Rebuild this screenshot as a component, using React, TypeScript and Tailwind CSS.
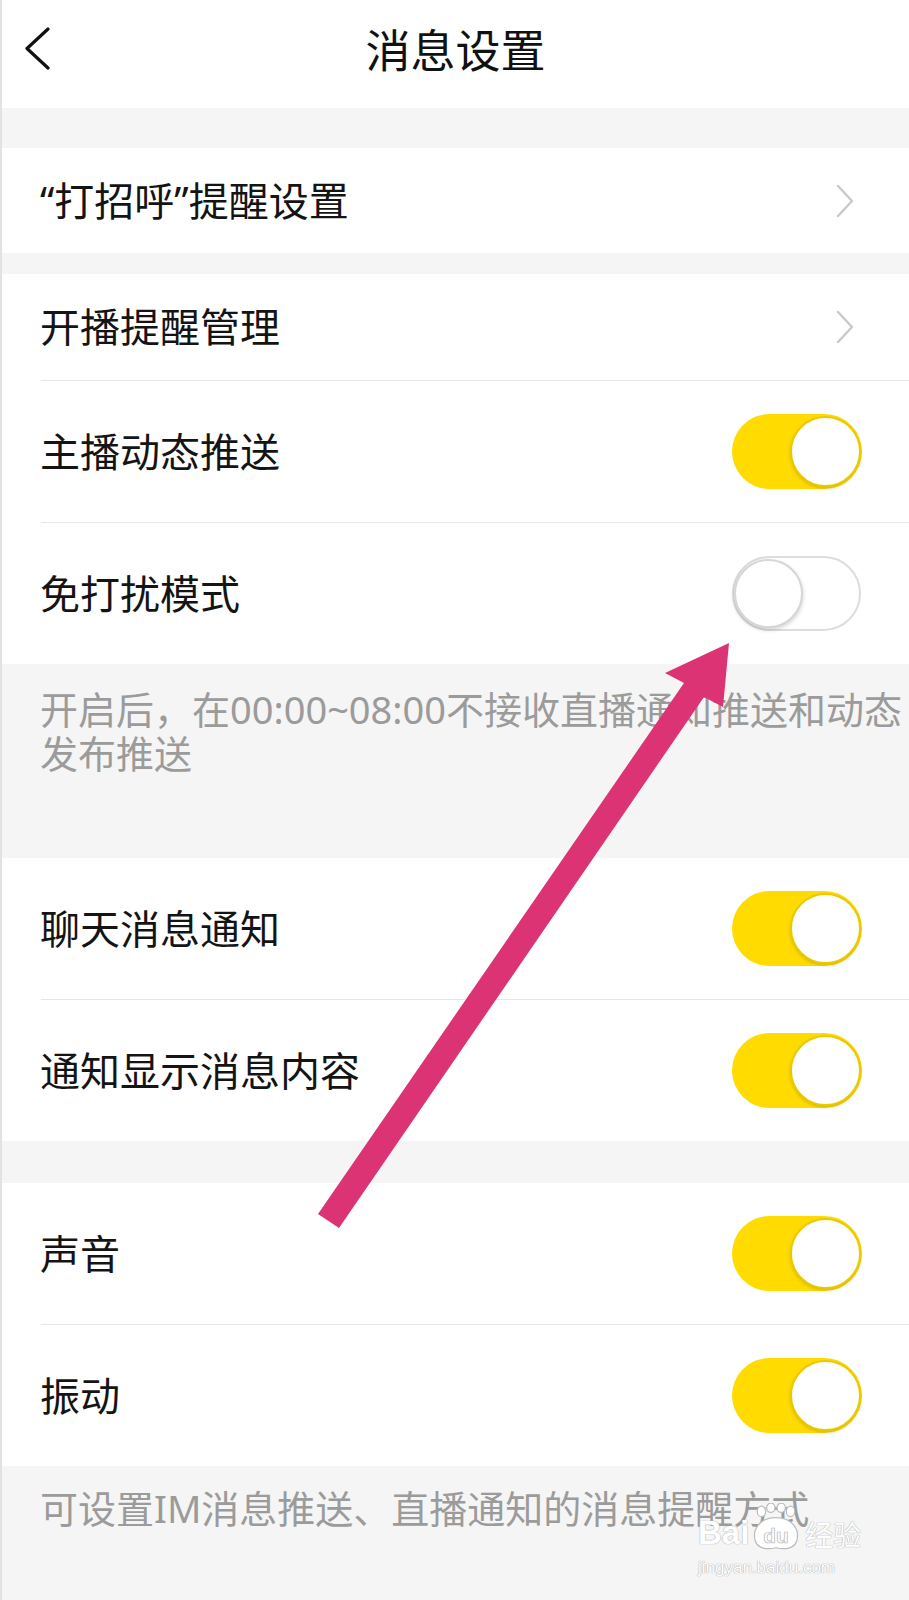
import React from "react";

const FONT = "font-['Noto_Sans','Noto_Sans_CJK_SC',sans-serif]";

function Chevron() {
  return (
    <svg width="20" height="34" viewBox="0 0 20 34" fill="none">
      <polyline points="3,2 17,17 3,32" stroke="#c9c9c9" strokeWidth="2.4" strokeLinecap="round" strokeLinejoin="round" />
    </svg>
  );
}

function Toggle({ on }: { on: boolean }) {
  if (on) {
    return (
      <div className="w-[130px] h-[75px] rounded-full bg-[#ffdb00] flex items-center justify-end pr-[1px]">
        <div className="w-[71px] h-[71px] rounded-full bg-white border-2 border-[#e9c900] shadow-[0_2px_3px_rgba(120,100,0,0.25)]" />
      </div>
    );
  }
  return (
    <div className="w-[129px] h-[75px] rounded-full bg-white border-2 border-[#dddddd] flex items-center justify-start">
      <div className="w-[69px] h-[69px] rounded-full bg-white border-2 border-[#d6d6d6] shadow-[0_2px_4px_rgba(0,0,0,0.18)]" />
    </div>
  );
}

function Row({ label, h, right }: { label: string; h: string; right: React.ReactNode }) {
  return (
    <div className={`${h} bg-white flex items-center justify-between pl-[38px]`}>
      <span className="text-[40px] leading-none font-normal text-[#141414] whitespace-nowrap">{label}</span>
      {right}
    </div>
  );
}

function Divider() {
  return (
    <div className="bg-white h-px">
      <div className="ml-[39px] h-px bg-[#e6e6e6]" />
    </div>
  );
}

function Watermark() {
  return (
    <div className="absolute left-[696px] top-[1503px] flex flex-col items-start pointer-events-none">
      <div className="flex items-end">
        <span className="text-[33px] leading-none font-bold text-white [text-shadow:0_0_1px_#aaaaaa,0_0_1px_#aaaaaa] font-['Liberation_Sans',sans-serif]">Bai</span>
        <svg width="54" height="48" viewBox="0 0 52 46" className="-mb-[2px]">
          <g fill="#ffffff" stroke="#bdbdbd" strokeWidth="1.2">
            <ellipse cx="12" cy="8" rx="4" ry="5" />
            <ellipse cx="21" cy="4.5" rx="4" ry="4.5" />
            <ellipse cx="31" cy="4.5" rx="4" ry="4.5" />
            <ellipse cx="40" cy="8" rx="4" ry="5" />
            <path d="M26 14 C 10 14, 3 26, 6 36 C 8 44, 18 45, 26 43 C 34 45, 44 44, 46 36 C 49 26, 42 14, 26 14 Z" />
          </g>
          <text x="26" y="38" textAnchor="middle" fontFamily="Liberation Sans, sans-serif" fontWeight="700" fontSize="20" fill="#ffffff" stroke="#b5b5b5" strokeWidth="0.7">du</text>
        </svg>
        <span className="ml-[2px] text-[28px] leading-none text-white [text-shadow:0_0_1px_#aaaaaa,0_0_1px_#aaaaaa]">经验</span>
      </div>
      <span className="mt-[10px] text-[17px] leading-none text-white [text-shadow:0_0_1px_#a8a8a8,0_0_1px_#a8a8a8] font-['Liberation_Sans',sans-serif]">jingyan.baidu.com</span>
    </div>
  );
}

function Arrow() {
  return (
    <svg className="absolute left-0 top-0 pointer-events-none" width="909" height="1600" viewBox="0 0 909 1600">
      <polygon
        points="727,643 721,707 702,697 337,1228 316,1214 682,683 663,673"
        fill="#dc3375"
      />
    </svg>
  );
}

export default function App() {
  return (
    <div className={`relative w-[909px] h-[1600px] overflow-hidden bg-[#f5f5f5] border-l-2 border-[#e2e2e2] ${FONT}`}>
      {/* Header */}
      <div className="h-[108px] bg-white relative flex items-center justify-center pb-[8px]">
        <div className="absolute left-[22px] top-[27px]">
          <svg width="28" height="44" viewBox="0 0 28 44" fill="none">
            <polyline points="24,2 3,21.5 24,41" stroke="#111111" strokeWidth="3.2" strokeLinecap="round" strokeLinejoin="round" />
          </svg>
        </div>
        <span className="text-[45px] leading-none font-normal text-[#111111]">消息设置</span>
      </div>

      <div className="h-[40px]" />

      <Row label="“打招呼”提醒设置" h="h-[105px]" right={<div className="pr-[54px] flex items-center"><Chevron /></div>} />

      <div className="h-[21px]" />

      <Row label="开播提醒管理" h="h-[106px]" right={<div className="pr-[54px] flex items-center"><Chevron /></div>} />
      <Divider />
      <Row label="主播动态推送" h="h-[141px]" right={<div className="pr-[47px]"><Toggle on /></div>} />
      <Divider />
      <Row label="免打扰模式" h="h-[141px]" right={<div className="pr-[48px]"><Toggle on={false} /></div>} />

      <div className="h-[194px] pl-[38px] pt-[23px] text-[38px] leading-[44px] font-normal text-[#9b9b9b]">
        <div className="whitespace-nowrap">开启后，在00:00~08:00不接收直播通知推送和动态</div>
        <div className="whitespace-nowrap">发布推送</div>
      </div>

      <Row label="聊天消息通知" h="h-[141px]" right={<div className="pr-[47px]"><Toggle on /></div>} />
      <Divider />
      <Row label="通知显示消息内容" h="h-[141px]" right={<div className="pr-[47px]"><Toggle on /></div>} />

      <div className="h-[42px]" />

      <Row label="声音" h="h-[141px]" right={<div className="pr-[47px]"><Toggle on /></div>} />
      <Divider />
      <Row label="振动" h="h-[141px]" right={<div className="pr-[47px]"><Toggle on /></div>} />

      <div className="pl-[38px] pt-[20px] text-[38px] leading-[44px] font-normal text-[#9b9b9b] whitespace-nowrap">
        可设置IM消息推送、直播通知的消息提醒方式
      </div>

      <Watermark />
      <Arrow />
    </div>
  );
}
